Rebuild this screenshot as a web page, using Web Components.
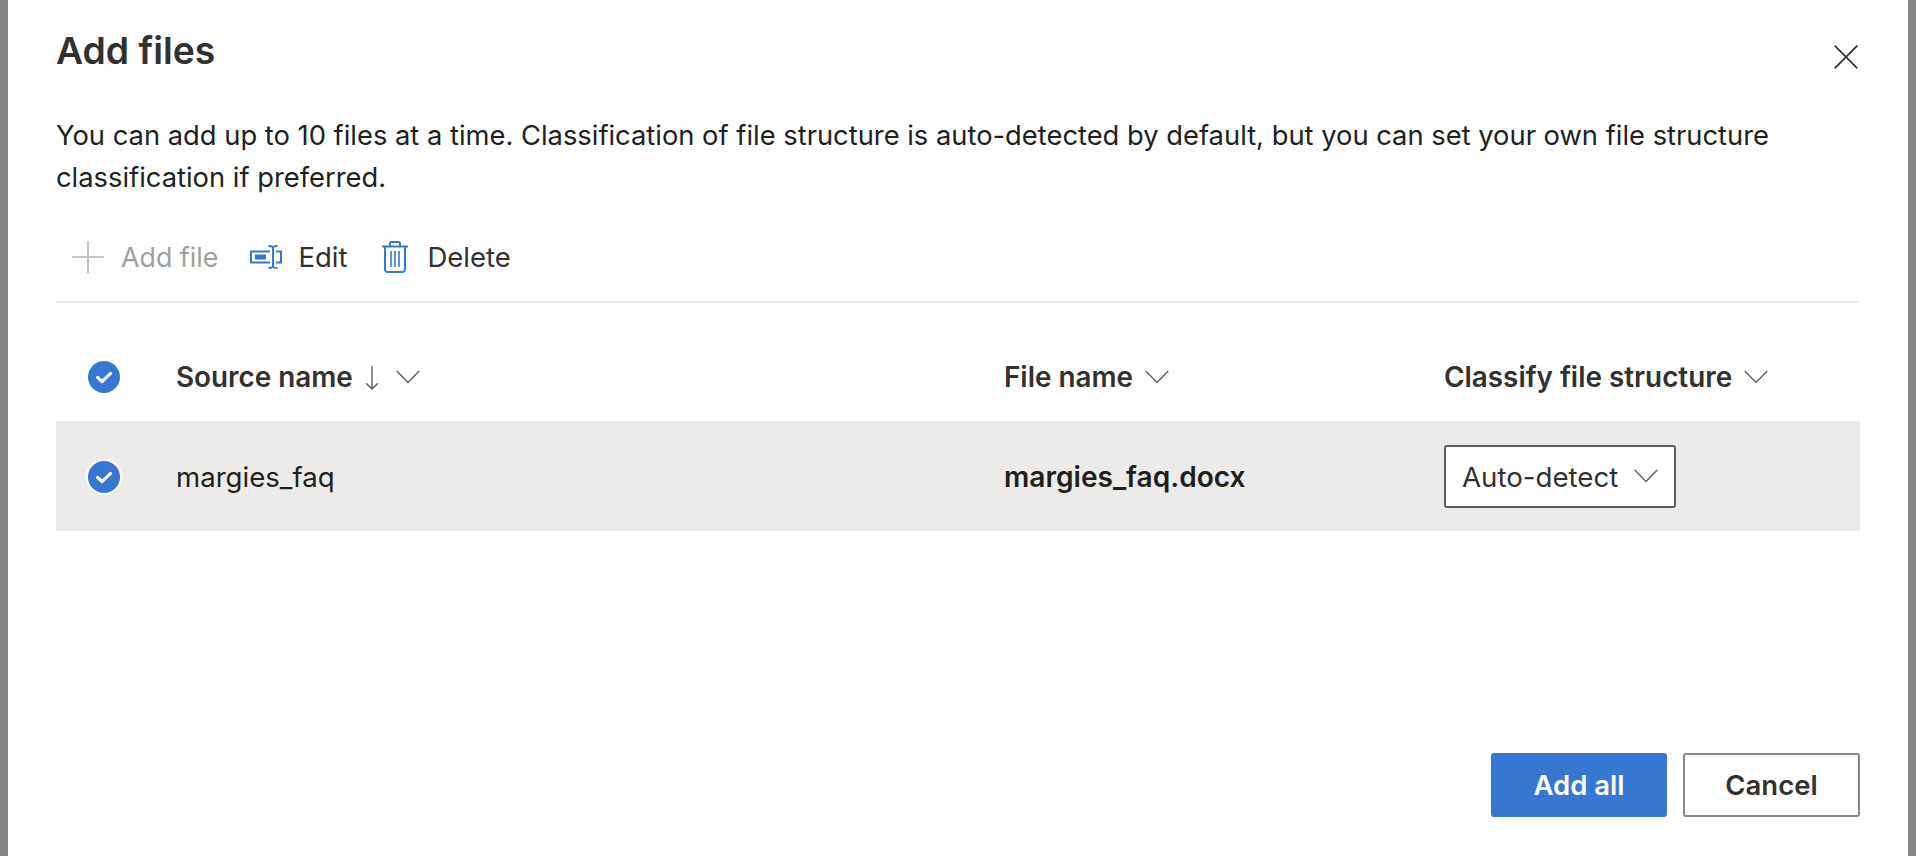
<!DOCTYPE html>
<html lang="en">
<head>
<meta charset="utf-8">
<title>Add files</title>
<style>
  html, body { margin: 0; height: 100%; }
  body { background: #848484; font-family: Inter, "Liberation Sans", sans-serif; color: #323130; overflow: hidden; }
</style>
</head>
<body>
<add-files-dialog heading="Add files">
  You can add up to 10 files at a time. Classification of file structure is auto-detected by default, but you can set your own file structure classification if preferred.
</add-files-dialog>

<script>
const CHECK_ICON = /* html */`
  <svg viewBox="0 0 32 32" width="32" height="32" aria-hidden="true">
    <circle cx="16" cy="16" r="16" fill="#3677d1"/>
    <path d="M9.600 16.400l4.400 4.200 8.600-8.200" fill="none" stroke="#fff" stroke-width="3.200" stroke-linecap="round" stroke-linejoin="round"/>
  </svg>`;

const CHEVRON_ICON = /* html */`
  <svg viewBox="0 0 24 14" width="24" height="14" aria-hidden="true">
    <path d="M.8 1l11.200 11.400L23.200 1" fill="none" stroke="#605e5c" stroke-width="1.400"/>
  </svg>`;

class ToolbarButton extends HTMLElement {
  constructor() {
    super();
    this.attachShadow({ mode: "open" });
    this.shadowRoot.innerHTML = /* html */`
      <style>
        :host { display: inline-flex; align-items: center; gap: 16px; font-size: 27.500px; color: #323130; }
        :host([disabled]) { gap: 17px; color: #a19f9d; font-size: 26.800px; }
        ::slotted(svg) { display: block; flex: none; }
      </style>
      <slot name="icon"></slot>
      <slot></slot>`;
  }
}

class SelectCheck extends HTMLElement {
  constructor() {
    super();
    this.attachShadow({ mode: "open" });
    this.shadowRoot.innerHTML = /* html */`
      <style>
        :host { display: inline-flex; border-radius: 50%; }
        :host([ringed]) { box-shadow: 0 0 0 2px #fff; }
        svg { display: block; }
      </style>
      ${CHECK_ICON}`;
  }
}

class ColumnHeader extends HTMLElement {
  constructor() {
    super();
    this.attachShadow({ mode: "open" });
    this.shadowRoot.innerHTML = /* html */`
      <style>
        :host { display: flex; align-items: center; gap: 12px; font-size: 27.850px; font-weight: 600; color: #323130; }
        svg { display: block; }
        .sort { display: none; }
        :host([sorted]) .sort { display: block; margin: 2px 5px 0 0; }
      </style>
      <span><slot></slot></span>
      <svg class="sort" viewBox="0 0 14 24" width="14" height="24" aria-hidden="true">
        <path d="M7 0v23M1.200 17.200L7 23l5.800-5.800" fill="none" stroke="#605e5c" stroke-width="1.400"/>
      </svg>
      ${CHEVRON_ICON}`;
  }
}

class StructureSelect extends HTMLElement {
  constructor() {
    super();
    this.attachShadow({ mode: "open" });
    this.shadowRoot.innerHTML = /* html */`
      <style>
        :host {
          display: inline-flex; align-items: center; justify-content: space-between; box-sizing: border-box;
          width: 232px; height: 63px; padding: 2px 16px 0 16px;
          background: #fff; border: 2px solid #605e5c; border-radius: 3px;
          font-size: 27.650px; color: #323130;
        }
        svg { display: block; margin-top: -2px; }
      </style>
      <span><slot></slot></span>
      ${CHEVRON_ICON}`;
  }
}

class DialogButton extends HTMLElement {
  constructor() {
    super();
    this.attachShadow({ mode: "open" });
    this.shadowRoot.innerHTML = /* html */`
      <style>
        :host {
          display: inline-flex; align-items: center; justify-content: center; box-sizing: border-box;
          height: 64px; width: 177px; border: 2px solid #8a8886; border-radius: 3px;
          background: #fff; color: #323130; font-size: 27.500px; font-weight: 600;
        }
        :host([primary]) { width: 176px; background: #3677d1; border-color: #3677d1; color: #fff; }
      </style>
      <slot></slot>`;
  }
}

class AddFilesDialog extends HTMLElement {
  constructor() {
    super();
    this.attachShadow({ mode: "open" });
    this.shadowRoot.innerHTML = /* html */`
      <style>
        :host {
          display: flex; flex-direction: column; box-sizing: border-box;
          height: 856px; margin: 0 8px; padding: 0 48px 39px 48px; background: #fff;
        }
        header { display: flex; justify-content: space-between; align-items: flex-start; padding-top: 26px; }
        h1 { margin: 0; font-size: 37.300px; line-height: 50px; font-weight: 600; color: #323130; }
        .close { display: block; margin: 19px 2px 0 0; }
        p { margin: 39px 0 0; font-size: 27.330px; line-height: 41.500px; color: #201f1e; max-width: 1760px; }
        .toolbar { display: flex; align-items: center; gap: 32px; height: 58px; margin-top: 30px; padding: 0 0 15px 16px; border-bottom: 2px solid #edebe9; }
        .trash { margin: 0 3px 0 3px; }
        .row, .head { display: grid; grid-template-columns: 120px 828px 440px 1fr; align-items: center; }
        .check { display: flex; padding-left: 32px; }
        .head { height: 88px; margin-top: 30px; }
        .row { height: 110px; background: #edebe9; font-size: 27.600px; color: #201f1e; }
        .row .check { padding-top: 2px; }
        .name { padding-top: 2px; }
        .file { font-size: 28.100px; font-weight: 600; }
        .spacer { flex: 1; }
        footer { display: flex; justify-content: flex-end; gap: 16px; }
      </style>
      <header>
        <h1></h1>
        <svg class="close" viewBox="0 0 24 24" width="24" height="24" aria-hidden="true">
          <path d="M.7.7l22.600 22.600M23.300.7L.7 23.300" fill="none" stroke="#323130" stroke-width="1.700"/>
        </svg>
      </header>
      <p><slot></slot></p>
      <div class="toolbar">
        <toolbar-button disabled>
          <svg slot="icon" viewBox="0 0 32 32" width="32" height="32"><path d="M16 0v32M0 16h32" fill="none" stroke="#c8c6c4" stroke-width="2"/></svg>
          Add file
        </toolbar-button>
        <toolbar-button>
          <svg slot="icon" viewBox="0 0 32 24" width="32" height="24">
            <g fill="none" stroke="#3677d1" stroke-width="2">
              <path d="M20 6.500H1v11h19M26 6.500h5v11h-5M23 2v20"/>
              <path d="M18.500 1c2.500 0 4.500.5 4.500 2 0-1.500 2-2 4.500-2M18.500 23c2.500 0 4.500-.5 4.500-2 0 1.500 2 2 4.500 2"/>
            </g>
            <rect x="5" y="9.500" width="11" height="5" fill="#3677d1"/>
          </svg>
          Edit
        </toolbar-button>
        <toolbar-button>
          <svg class="trash" slot="icon" viewBox="0 0 26 32" width="26" height="32">
            <g fill="none" stroke="#3677d1" stroke-width="2">
              <path d="M0 5.500h26M3 5.500v23a2.500 2.500 0 0 0 2.500 2.500h15a2.500 2.500 0 0 0 2.500-2.500v-23"/>
              <path d="M8 5.500v-3A1.500 1.500 0 0 1 9.500 1h7A1.500 1.500 0 0 1 18 2.500v3"/>
              <path d="M9 10v16M13 10v16M17 10v16" stroke-width="1.600"/>
            </g>
          </svg>
          Delete
        </toolbar-button>
      </div>
      <div class="head">
        <div class="check"><select-check></select-check></div>
        <column-header sorted>Source name</column-header>
        <column-header>File name</column-header>
        <column-header>Classify file structure</column-header>
      </div>
      <div class="row">
        <div class="check"><select-check ringed></select-check></div>
        <div class="name">margies_faq</div>
        <div class="name file">margies_faq.docx</div>
        <div><structure-select>Auto-detect</structure-select></div>
      </div>
      <div class="spacer"></div>
      <footer>
        <dialog-button primary>Add all</dialog-button>
        <dialog-button>Cancel</dialog-button>
      </footer>`;
  }

  connectedCallback() {
    this.shadowRoot.querySelector("h1").textContent = this.getAttribute("heading");
  }
}

customElements.define("toolbar-button", ToolbarButton);
customElements.define("select-check", SelectCheck);
customElements.define("column-header", ColumnHeader);
customElements.define("structure-select", StructureSelect);
customElements.define("dialog-button", DialogButton);
customElements.define("add-files-dialog", AddFilesDialog);
</script>
</body>
</html>
